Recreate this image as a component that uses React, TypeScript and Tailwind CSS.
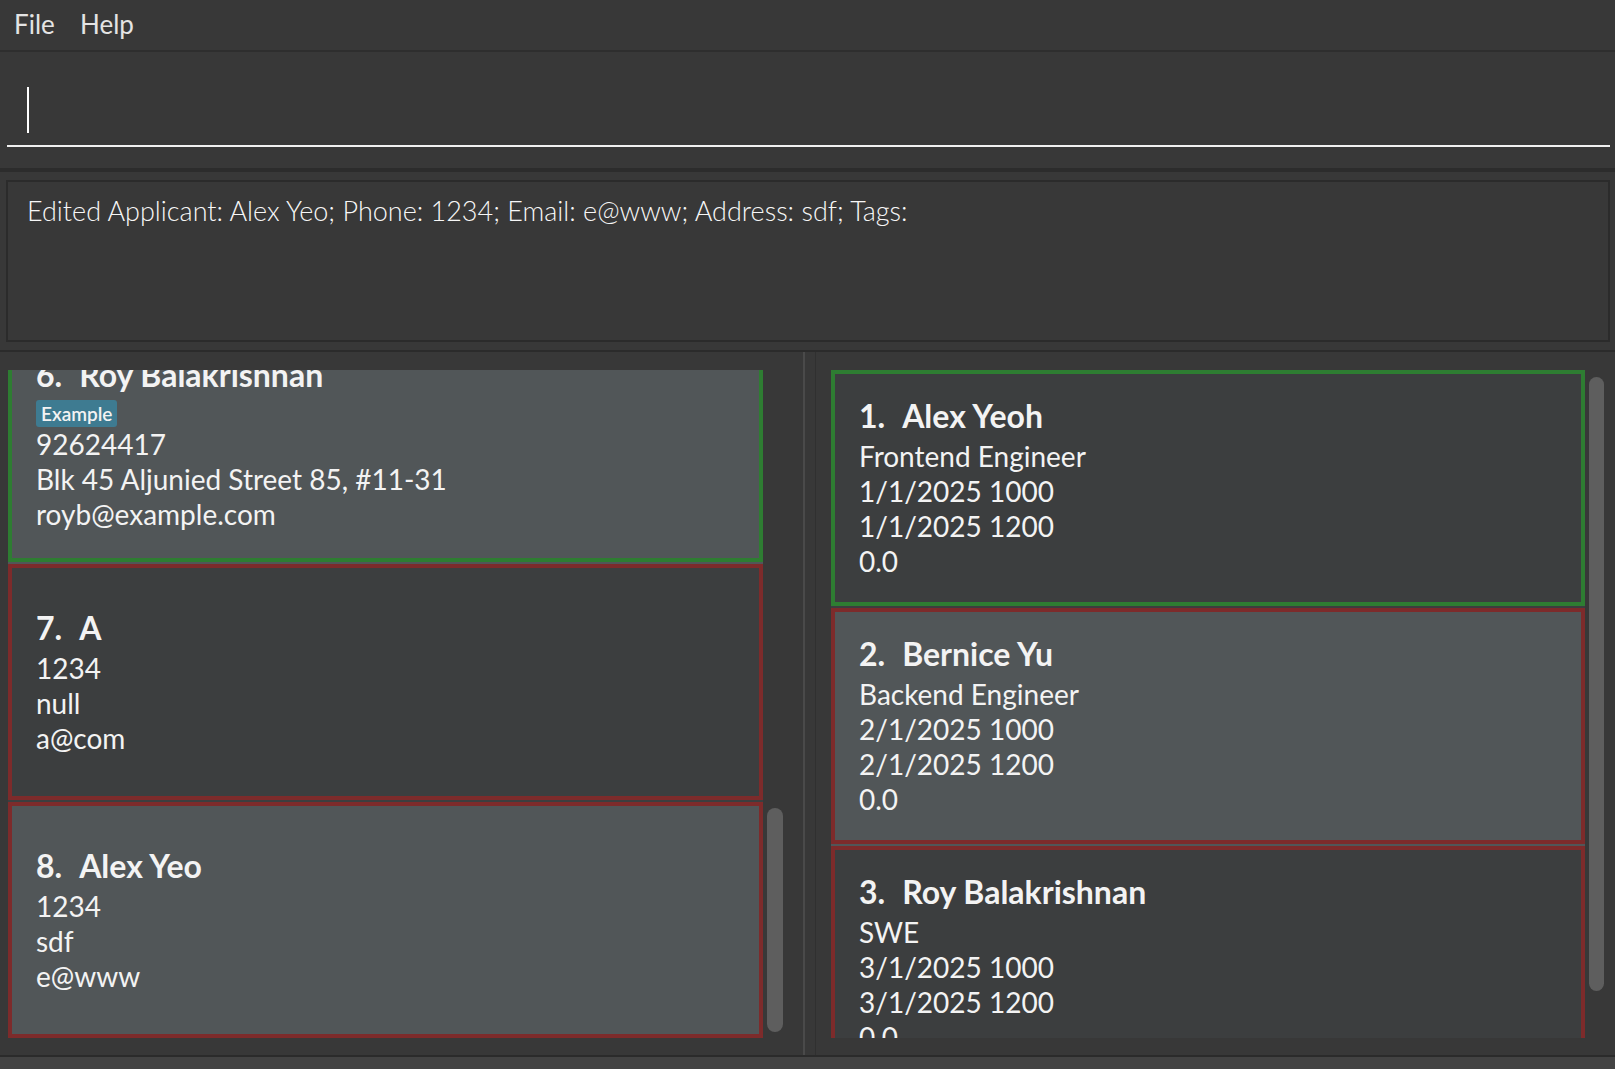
type Tone = 'dark' | 'light';

const toneBg: Record<Tone, string> = {
  dark: 'bg-[#3c3e3f]',
  light: 'bg-[#515658]',
};

type CardProps = {
  id: number;
  name: string;
  lines: string[];
  tone: Tone;
  selected?: boolean;
  tag?: string;
};

function Card({ id, name, lines, tone, selected, tag }: CardProps) {
  return (
    <div className={`${toneBg[tone]} pb-[2px]`}>
      <div
        className={`h-[236px] border-4 ${selected ? 'border-[#2e7d32]' : 'border-[#7d2b2b]'} ${toneBg[tone]} flex flex-col justify-center pl-[24px] pt-[18px] pb-[23px] text-[#f3f3f3]`}
      >
        <div className="flex text-[32px] leading-[47px] font-bold">
          <span>{id}.</span>
          <span className="ml-[17px]">{name}</span>
        </div>
        {tag && (
          <span className="self-start mt-[2px] h-[27px] px-[5px] rounded-[3px] bg-[#3e7b91] text-[19px] leading-[27px] font-semibold">
            {tag}
          </span>
        )}
        {lines.map((l, i) => (
          <div key={i} className="text-[28px] leading-[35px]">
            {l}
          </div>
        ))}
      </div>
    </div>
  );
}

const applicants: CardProps[] = [
  {
    id: 6,
    name: 'Roy Balakrishnan',
    tag: 'Example',
    lines: ['92624417', 'Blk 45 Aljunied Street 85, #11-31', 'royb@example.com'],
    tone: 'light',
    selected: true,
  },
  { id: 7, name: 'A', lines: ['1234', 'null', 'a@com'], tone: 'dark' },
  { id: 8, name: 'Alex Yeo', lines: ['1234', 'sdf', 'e@www'], tone: 'light' },
];

const jobs: CardProps[] = [
  {
    id: 1,
    name: 'Alex Yeoh',
    lines: ['Frontend Engineer', '1/1/2025 1000', '1/1/2025 1200', '0.0'],
    tone: 'dark',
    selected: true,
  },
  {
    id: 2,
    name: 'Bernice Yu',
    lines: ['Backend Engineer', '2/1/2025 1000', '2/1/2025 1200', '0.0'],
    tone: 'light',
  },
  {
    id: 3,
    name: 'Roy Balakrishnan',
    lines: ['SWE', '3/1/2025 1000', '3/1/2025 1200', '0.0'],
    tone: 'dark',
  },
];

export default function App() {
  return (
    <div className="w-[1615px] h-[1069px] overflow-hidden bg-[#383838] flex flex-col text-white font-[family-name:Lato,'Open_Sans',sans-serif]">
      {/* menu bar */}
      <div className="h-[52px] shrink-0 flex pl-[14px] pt-[5px] text-[26px] leading-normal text-[#e4e4e4] border-b-2 border-[#2e2e2e]">
        <span className="w-[66px]">File</span>
        <span>Help</span>
      </div>

      {/* command box */}
      <div className="h-[120px] shrink-0 pl-[7px] pr-[5px] pt-[33px] border-b-4 border-[#2c2c2c]">
        <div className="h-[62px] border-b-2 border-[#f0f0f0] pl-[20px] pt-[2px]">
          <div className="w-[2px] h-[46px] bg-white" />
        </div>
      </div>

      {/* result display */}
      <div className="h-[178px] shrink-0 pt-[8px] pl-[6px] pr-[5px]">
        <div className="h-[162px] border-2 border-[#2b2b2b] pl-[19px] pt-[9px] text-[27px] font-light leading-normal text-[#f7f7f7]">
          Edited Applicant: Alex Yeo; Phone: 1234; Email: e@www; Address: sdf; Tags:
        </div>
      </div>

      {/* split pane */}
      <div className="h-[707px] shrink-0 flex border-t-2 border-b-2 border-[#2b2b2b]">
        {/* applicant list */}
        <div className="w-[803px] flex pl-[8px] pt-[18px] pb-[17px]">
          <div className="w-[755px] overflow-hidden">
            <div className="-mt-[44px] flex flex-col">
              {applicants.map((a) => (
                <Card key={a.id} {...a} />
              ))}
            </div>
          </div>
          <div className="w-[16px] ml-[4px]">
            <div className="mt-[438px] h-[224px] rounded-[8px] bg-[#5e5e5e]" />
          </div>
        </div>

        <div className="w-[2px] bg-[#4a4a4a]" />

        {/* job list */}
        <div className="flex-1 ml-[10px] border-l border-[#303030] flex pl-[15px] pt-[18px] pb-[17px]">
          <div className="w-[754px] overflow-hidden">
            <div className="flex flex-col">
              {jobs.map((j) => (
                <Card key={j.id} {...j} />
              ))}
            </div>
          </div>
          <div className="w-[15px] ml-[4px]">
            <div className="mt-[7px] h-[614px] rounded-[8px] bg-[#5e5e5e]" />
          </div>
        </div>
      </div>

      {/* status bar */}
      <div className="flex-1 bg-[#434343]" />
    </div>
  );
}
